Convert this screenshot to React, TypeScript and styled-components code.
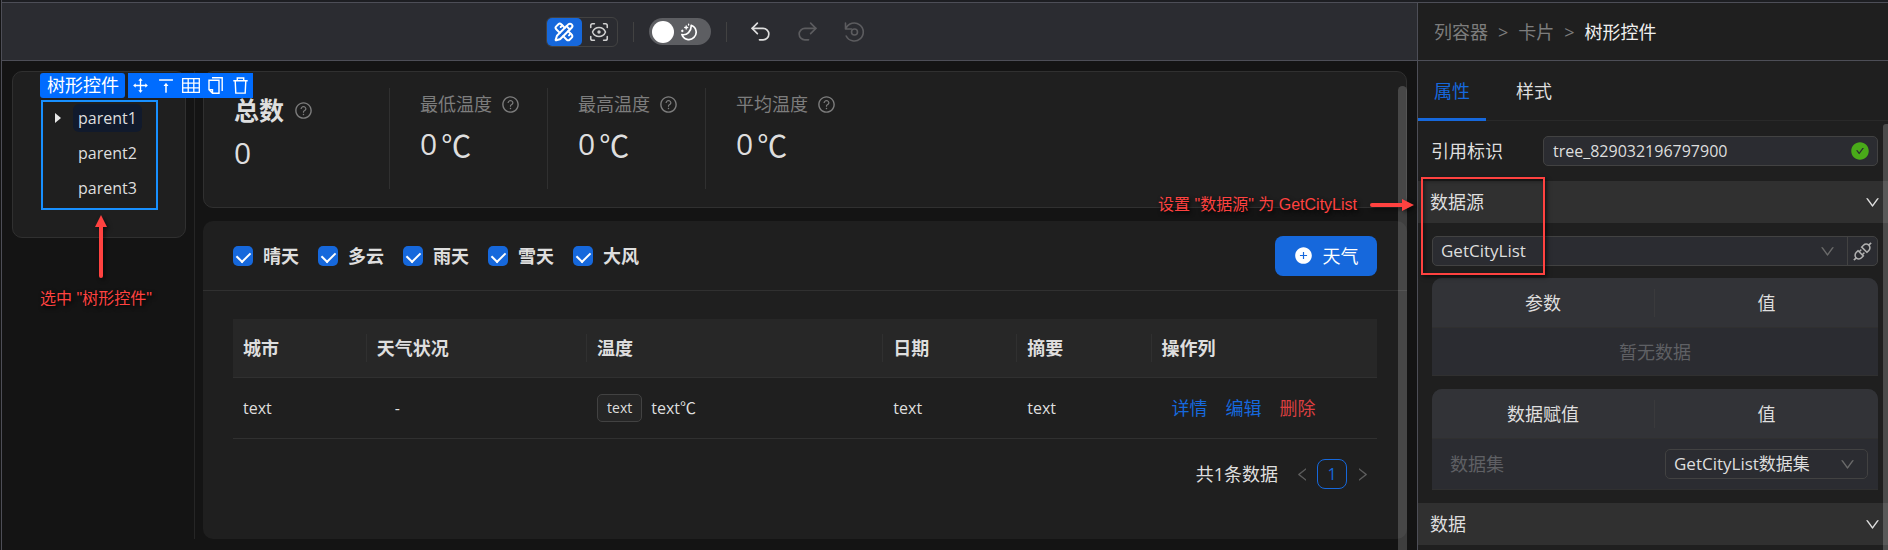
import React from "react";
import styled, { createGlobalStyle, css } from "styled-components";
import { PencilRuler, ScanEye, Undo2, Redo2 } from "lucide-react";
import {
  AiOutlineQuestionCircle,
  AiFillPlusCircle,
  AiFillCheckCircle,
  AiOutlineApi,
  AiOutlineDown,
  AiOutlineLeft,
  AiOutlineRight,
  AiOutlineDrag,
  AiOutlineVerticalAlignTop,
} from "react-icons/ai";

const c = {
  line: "#4d4e57",
  soft: "#303030",
  page: "#141414",
  card: "#1f1f1f",
  bar: "#2b2c31",
  text: "#dedede",
  mute: "#7d7d7d",
  blue: "#1668dc",
  red: "#ff4240",
};

const GlobalStyle = createGlobalStyle`
  * { box-sizing: border-box; }
  body {
    margin: 0;
    background: ${c.page};
    color: ${c.text};
    font: 18px/28px "Open Sans", "Noto Sans CJK SC", sans-serif;
  }
  button, input, select { font: inherit; color: inherit; }
  button { padding: 0; border: 0; background: none; }
  svg { display: block; flex: none; }
`;

/* ---------- shell ---------- */

const Shell = styled.div`
  position: relative;
  display: grid;
  grid-template-columns: minmax(0, 1fr) 471px;
  grid-template-rows: 3px 1fr;
  min-height: 100vh;
  margin-left: 1px;
  border-left: 1px solid ${c.line};
  overflow: hidden;
  &::before {
    content: "";
    grid-column: 1 / -1;
    background: #1d1e22;
    border-bottom: 1px solid ${c.line};
  }
`;

const Main = styled.main`
  display: flex;
  flex-direction: column;
`;

const Toolbar = styled.header`
  display: flex;
  align-items: center;
  justify-content: center;
  height: 58px;
  padding-right: 7px;
  background: ${c.bar};
  border-bottom: 1px solid ${c.line};
`;

const ModeGroup = styled.div`
  display: flex;
  border: 1px solid #424242;
  border-radius: 6px;
`;

const ModeButton = styled.button<{ $on?: boolean }>`
  display: flex;
  align-items: center;
  justify-content: center;
  width: 35px;
  height: 28px;
  border-radius: 5px;
  color: ${(p) => (p.$on ? "#fff" : "#d0d0d0")};
  background: ${(p) => (p.$on ? c.blue : "transparent")};
`;

const Separator = styled.span`
  width: 1px;
  height: 20px;
  margin: 0 15px;
  background: #424242;
`;

const ThemeSwitch = styled.button`
  display: flex;
  align-items: center;
  gap: 6px;
  width: 62px;
  height: 27px;
  padding: 0 3px;
  border-radius: 14px;
  background: #5d5e62;
  color: #fff;
`;

const Knob = styled.span`
  width: 22px;
  height: 22px;
  border-radius: 50%;
  background: #fff;
`;

const History = styled.div`
  display: flex;
  gap: 22px;
  padding-left: 6px;
`;

const HistoryButton = styled.button`
  width: 25px;
  color: ${c.text};
  &:disabled { color: #5c5c5f; }
`;

/* ---------- canvas ---------- */

const Canvas = styled.div`
  position: relative;
  display: flex;
  flex: 1;
  gap: 8px;
  padding: 10px 10px 11px;
`;

const SideColumn = styled.div`
  width: 183px;
  padding-right: 8px;
  border-right: 1px solid #262626;
`;

const card = css`
  background: ${c.card};
  border: 1px solid ${c.soft};
  border-radius: 10px;
`;

const TreeCard = styled.section`
  ${card}
  height: 167px;
  padding: 28px;
`;

const Selected = styled.div`
  position: relative;
  width: 117px;
  border: 2px solid #1890ff;
`;

const SelectionBar = styled.div`
  position: absolute;
  left: -3px;
  bottom: 100%;
  display: flex;
  gap: 3px;
  padding-bottom: 4px;
`;

const SelectionName = styled.span`
  height: 25px;
  padding: 0 6px 0 7px;
  border-radius: 3px;
  background: #006cff;
  color: #fff;
  line-height: 25px;
  white-space: nowrap;
`;

const SelectionTools = styled.div`
  display: flex;
  height: 25px;
  background: #006cff;
  color: #fff;
`;

const ToolButton = styled.button`
  display: flex;
  align-items: center;
  justify-content: center;
  width: 25px;
`;

const TreeList = styled.ul`
  display: grid;
  gap: 7px;
  margin: 0;
  padding: 2px 0 6px;
  list-style: none;
`;

const TreeRow = styled.li`
  display: flex;
  align-items: center;
  height: 28px;
  font-size: 16px;
`;

const Caret = styled.span`
  display: flex;
  width: 30px;
  padding-left: 12px;
`;

const TreeLabel = styled.span<{ $on?: boolean }>`
  padding: 0 5px;
  border-radius: 6px;
  background: ${(p) => (p.$on ? "#111a2c" : "transparent")};
`;

const Content = styled.div`
  display: flex;
  flex: 1;
  flex-direction: column;
  gap: 13px;
  min-width: 0;
`;

const Stats = styled.section`
  ${card}
  display: flex;
  height: 137px;
  padding: 16px 0 0;
`;

const Stat = styled.div<{ $main?: boolean }>`
  width: ${(p) => (p.$main ? "186px" : "158px")};
  height: 101px;
  padding: ${(p) => (p.$main ? "8px 0 0 30px" : "2px 0 0 30px")};
  border-right: 1px solid ${c.soft};
  &:last-child { border-right: 0; }
`;

const StatTitle = styled.h2<{ $main?: boolean }>`
  display: flex;
  align-items: center;
  gap: ${(p) => (p.$main ? "10px" : "9px")};
  margin: 0;
  color: ${(p) => (p.$main ? c.text : c.mute)};
  font-size: ${(p) => (p.$main ? "25px" : "18px")};
  font-weight: ${(p) => (p.$main ? 700 : 400)};
  line-height: 28px;
  svg { color: ${c.mute}; }
`;

const StatValue = styled.p<{ $main?: boolean }>`
  display: flex;
  gap: 4px;
  margin: ${(p) => (p.$main ? "11px" : "8px")} 0 0;
  font-size: 30px;
  line-height: 36px;
`;

const Unit = styled.span`
  font-family: "Noto Sans CJK SC", sans-serif;
  font-size: 30px;
`;

const Weather = styled.section`
  flex: 1;
  background: ${c.card};
  border-radius: 10px;
`;

const Filters = styled.div`
  display: flex;
  align-items: center;
  height: 70px;
  padding: 0 30px;
  border-bottom: 1px solid ${c.soft};
`;

const CheckLabel = styled.label`
  display: flex;
  align-items: center;
  gap: 10px;
  width: 85px;
  font-weight: 700;
`;

const CheckInput = styled.input`
  appearance: none;
  width: 20px;
  height: 20px;
  margin: 0;
  border-radius: 5px;
  background: ${c.blue};
  &:checked::before {
    content: "";
    display: block;
    width: 7px;
    height: 11px;
    margin: 3px 6px;
    border: solid #fff;
    border-width: 0 2px 2px 0;
    transform: rotate(45deg);
  }
`;

const AddButton = styled.button`
  display: flex;
  align-items: center;
  justify-content: center;
  gap: 10px;
  width: 102px;
  height: 40px;
  margin-left: auto;
  border-radius: 8px;
  background: ${c.blue};
  color: #fff;
`;

const TableArea = styled.div`
  padding: 28px 30px 0;
`;

const DataTable = styled.table`
  width: 100%;
  border-collapse: separate;
  border-spacing: 0;
  table-layout: fixed;
`;

const HeadCell = styled.th<{ $w: string }>`
  width: ${(p) => p.$w};
  height: 59px;
  padding: 0;
  background: #272727;
  border-bottom: 1px solid ${c.soft};
  text-align: left;
  span {
    display: block;
    padding-left: 10px;
    border-right: 1px solid ${c.soft};
  }
  &:last-child span { border-right: 0; }
`;

const Cell = styled.td<{ $pad?: number }>`
  height: 61px;
  padding: 0 0 0 ${(p) => p.$pad ?? 10}px;
  border-bottom: 1px solid ${c.soft};
  font-size: 16px;
`;

const Temperature = styled.div`
  display: flex;
  align-items: center;
  gap: 9px;
`;

const Tag = styled.span`
  padding: 0 9px;
  border: 1px solid #424242;
  border-radius: 5px;
  background: #262626;
  font-size: 14px;
  line-height: 26px;
`;

const Actions = styled.div`
  display: flex;
  gap: 18px;
  font-size: 18px;
`;

const ActionLink = styled.a<{ $danger?: boolean }>`
  color: ${(p) => (p.$danger ? "#dc3f41" : c.blue)};
  text-decoration: none;
`;

const Pager = styled.nav`
  display: flex;
  align-items: center;
  justify-content: flex-end;
  height: 30px;
  margin-top: 20px;
`;

const PageStep = styled.button`
  display: flex;
  align-items: center;
  justify-content: center;
  width: 30px;
  height: 30px;
  color: #5c5c5c;
`;

const PageNumber = styled.button`
  width: 30px;
  height: 30px;
  border: 1px solid ${c.blue};
  border-radius: 8px;
  color: ${c.blue};
  font-size: 16px;
`;

const PagerTotal = styled.span`
  margin-right: 9px;
`;

const CanvasScroll = styled.div`
  position: absolute;
  top: 25px;
  right: 10px;
  bottom: 0;
  width: 9px;
  border-radius: 5px 5px 0 0;
  background: rgba(255, 255, 255, 0.18);
`;

/* ---------- inspector ---------- */

const Inspector = styled.aside`
  position: relative;
  background: ${c.card};
  border-left: 1px solid ${c.line};
`;

const Crumbs = styled.nav`
  display: flex;
  align-items: center;
  gap: 10px;
  height: 58px;
  padding-left: 16px;
  border-bottom: 1px solid ${c.line};
  color: ${c.mute};
`;

const Crumb = styled.a`
  color: inherit;
  text-decoration: none;
  &:last-child { color: #f0f0f0; }
`;

const Tabs = styled.div`
  display: flex;
  gap: 14px;
  height: 60px;
  border-bottom: 1px solid #292929;
`;

const Tab = styled.button<{ $on?: boolean }>`
  width: 68px;
  height: 60px;
  padding-top: 3px;
  border-bottom: 3px solid ${(p) => (p.$on ? c.blue : "transparent")};
  color: ${(p) => (p.$on ? c.blue : c.text)};
`;

const Field = styled.div`
  display: flex;
  align-items: center;
  justify-content: space-between;
  height: 60px;
  padding: 0 10px 0 13px;
`;

const box = css`
  background: ${c.bar};
  border: 1px solid #424242;
  border-radius: 5px;
`;

const InputBox = styled.div`
  ${box}
  display: flex;
  align-items: center;
  width: 335px;
  height: 30px;
  padding-right: 7px;
  svg { color: #49aa19; }
`;

const TextInput = styled.input`
  flex: 1;
  min-width: 0;
  padding: 0 9px;
  border: 0;
  outline: 0;
  background: none;
  font-size: 16px;
`;

const SectionHead = styled.button`
  display: flex;
  align-items: center;
  justify-content: space-between;
  width: 100%;
  height: 42px;
  padding: 0 7px 0 12px;
  background: #303030;
`;

const SectionBody = styled.div`
  padding: 13px 10px 13px 14px;
`;

const SourceRow = styled.div`
  ${box}
  display: flex;
  height: 30px;
  margin-bottom: 12px;
`;

const SelectWrap = styled.div<{ $boxed?: boolean }>`
  ${(p) => p.$boxed && box}
  position: relative;
  flex: 1;
  height: ${(p) => (p.$boxed ? "30px" : "28px")};
  svg {
    position: absolute;
    top: 6px;
    right: 11px;
    color: #6a6a6a;
    pointer-events: none;
  }
`;

const Select = styled.select`
  appearance: none;
  display: block;
  width: 100%;
  height: 28px;
  padding: 0 8px;
  border: 0;
  outline: 0;
  background: none;
  font-size: 17px;
  line-height: 28px;
`;

const ApiButton = styled.button`
  display: flex;
  align-items: center;
  justify-content: center;
  width: 30px;
  border-left: 1px solid #424242;
  color: #b0b0b0;
`;

const ParamTable = styled.table`
  width: 100%;
  margin-bottom: 13px;
  border-collapse: separate;
  border-spacing: 0;
  border-radius: 10px 10px 0 0;
  overflow: hidden;
  table-layout: fixed;
  background: ${c.bar};
  &:last-child { margin-bottom: 0; }
`;

const ParamHead = styled.th`
  height: 50px;
  padding: 0;
  background: #323337;
  border-bottom: 1px solid ${c.soft};
  font-weight: 400;
  &:first-child span {
    display: block;
    border-right: 1px solid #3a3a3c;
  }
`;

const ParamCell = styled.td<{ $center?: boolean }>`
  height: ${(p) => (p.$center ? "48px" : "51px")};
  padding: 0 10px;
  border-bottom: 1px solid ${c.soft};
  color: #5f6064;
  text-align: ${(p) => (p.$center ? "center" : "left")};
  &:first-child:not(:last-child) { padding-left: 18px; }
  select { color: ${c.text}; }
`;

const PanelScroll = styled.div`
  position: absolute;
  top: 121px;
  right: 0;
  bottom: 0;
  width: 5px;
  border-radius: 3px 0 0 0;
  background: rgba(255, 255, 255, 0.2);
`;

/* ---------- tutorial marks ---------- */

const Note = styled.div`
  color: ${c.red};
  font: 16px/20px "Liberation Sans", "Noto Sans CJK SC", sans-serif;
  white-space: nowrap;
  text-shadow: 2px 2px 4px #000;
  svg { filter: drop-shadow(2px 2px 2px rgba(0, 0, 0, 0.6)); }
`;

const TreeNote = styled(Note)`
  position: absolute;
  top: calc(100% + 6px);
  left: -3px;
  display: grid;
  gap: 9px;
  svg { margin-left: 54px; }
`;

const SourceGroup = styled.section`
  position: relative;
`;

const SourceMark = styled.div`
  position: absolute;
  top: -4px;
  left: 3px;
  width: 124px;
  height: 98px;
  border: 2px solid ${c.red};
  box-shadow: 2px 2px 4px rgba(0, 0, 0, 0.6), inset 2px 2px 4px rgba(0, 0, 0, 0.4);
  pointer-events: none;
`;

const SourceNote = styled(Note)`
  position: absolute;
  top: 14px;
  right: calc(100% + 4px);
  display: flex;
  align-items: center;
  gap: 13px;
`;

/* ---------- drawings ---------- */

const MoonIcon = () => (
  <svg width="18" height="18" viewBox="0 0 18 18" fill="none" stroke="currentColor" strokeWidth="1.7" strokeLinecap="round" strokeLinejoin="round">
    <path d="M11.200 2.300a7.300 7.300 0 1 1-9.300 9.200c5 1.300 9.600-3.400 9.300-9.200z" />
    <path d="M6.200 3v3M4.700 4.500h3M2.300 7.200v1.400M1.600 7.900h1.400M8.600 1.200v.8" strokeWidth="1.300" />
  </svg>
);

const RestoreIcon = () => (
  <svg width="25" height="22" viewBox="0 0 25 22" fill="none" stroke="currentColor" strokeWidth="1.600" strokeLinecap="round" strokeLinejoin="round">
    <path d="M3.500 2v6h6M4 7.500a9 9 0 1 1 .2 7.500" />
    <circle cx="12.500" cy="11" r="3" />
  </svg>
);

const GridIcon = () => (
  <svg width="18" height="15" viewBox="0 0 18 15" fill="none" stroke="currentColor" strokeWidth="1.300">
    <path d="M.7.7h16.600v13.600H.7zM.7 5.200h16.600M.7 9.800h16.600M6.200.7v13.600M11.800.7v13.600" />
  </svg>
);

const CopyIcon = () => (
  <svg width="15" height="17" viewBox="0 0 15 17" fill="none" stroke="currentColor" strokeWidth="1.400">
    <path d="M4 .8h10.200V14M1 3.300h10v12.900H4.500L1 12.700zM1 12.700h3.500v3.500" />
  </svg>
);

const TrashIcon = () => (
  <svg width="15" height="17" viewBox="0 0 15 17" fill="none" stroke="currentColor" strokeWidth="1.400">
    <path d="M.3 3.700h14.400M4.300 3.700V1h6.400v2.700M2.200 3.700l.6 12.400h9.400l.6-12.400" />
  </svg>
);

const UpArrow = () => (
  <svg width="14" height="66" viewBox="0 0 14 66">
    <path d="M7 1l6 12H1z" fill={c.red} />
    <path d="M7 12v50" stroke={c.red} strokeWidth="4" strokeLinecap="round" />
  </svg>
);

const RightArrow = () => (
  <svg width="44" height="14" viewBox="0 0 44 14">
    <path d="M44 7L32 1v12z" fill={c.red} />
    <path d="M2 7h32" stroke={c.red} strokeWidth="4" strokeLinecap="round" />
  </svg>
);

const Down = () => <AiOutlineDown size={17} />;

const filters = ["晴天", "多云", "雨天", "雪天", "大风"];
const temps = ["最低温度", "最高温度", "平均温度"];
const columns: [string, string][] = [
  ["城市", "11.7%"],
  ["天气状况", "19.25%"],
  ["温度", "25.9%"],
  ["日期", "11.7%"],
  ["摘要", "11.75%"],
  ["操作列", "19.7%"],
];

export default function App() {
  return (
    <>
      <GlobalStyle />
      <Shell>
        <Main>
          <Toolbar>
            <ModeGroup>
              <ModeButton $on aria-label="设计"><PencilRuler size={20} strokeWidth={2.4} /></ModeButton>
              <ModeButton aria-label="预览"><ScanEye size={22} strokeWidth={1.7} /></ModeButton>
            </ModeGroup>
            <Separator />
            <ThemeSwitch aria-label="主题"><Knob /><MoonIcon /></ThemeSwitch>
            <Separator />
            <History>
              <HistoryButton aria-label="撤销"><Undo2 size={25} strokeWidth={1.6} /></HistoryButton>
              <HistoryButton aria-label="重做" disabled><Redo2 size={25} strokeWidth={1.6} /></HistoryButton>
              <HistoryButton aria-label="还原" disabled><RestoreIcon /></HistoryButton>
            </History>
          </Toolbar>

          <Canvas>
            <SideColumn>
              <TreeCard>
                <Selected>
                  <SelectionBar>
                    <SelectionName>树形控件</SelectionName>
                    <SelectionTools>
                      <ToolButton aria-label="移动"><AiOutlineDrag size={19} /></ToolButton>
                      <ToolButton aria-label="上级"><AiOutlineVerticalAlignTop size={20} /></ToolButton>
                      <ToolButton aria-label="表格"><GridIcon /></ToolButton>
                      <ToolButton aria-label="复制"><CopyIcon /></ToolButton>
                      <ToolButton aria-label="删除"><TrashIcon /></ToolButton>
                    </SelectionTools>
                  </SelectionBar>
                  <TreeList>
                    <TreeRow>
                      <Caret>
                        <svg width="6" height="10" viewBox="0 0 6 10"><path d="M0 0l6 5-6 5z" fill="#e8e8e8" /></svg>
                      </Caret>
                      <TreeLabel $on>parent1</TreeLabel>
                    </TreeRow>
                    <TreeRow><Caret /><TreeLabel>parent2</TreeLabel></TreeRow>
                    <TreeRow><Caret /><TreeLabel>parent3</TreeLabel></TreeRow>
                  </TreeList>
                  <TreeNote><UpArrow />选中 "树形控件"</TreeNote>
                </Selected>
              </TreeCard>
            </SideColumn>

            <Content>
              <Stats>
                <Stat $main>
                  <StatTitle $main>总数<AiOutlineQuestionCircle size={19} /></StatTitle>
                  <StatValue $main>0</StatValue>
                </Stat>
                {temps.map((name) => (
                  <Stat key={name}>
                    <StatTitle>{name}<AiOutlineQuestionCircle size={19} /></StatTitle>
                    <StatValue>0<Unit>℃</Unit></StatValue>
                  </Stat>
                ))}
              </Stats>

              <Weather>
                <Filters>
                  {filters.map((name) => (
                    <CheckLabel key={name}>
                      <CheckInput type="checkbox" defaultChecked />
                      {name}
                    </CheckLabel>
                  ))}
                  <AddButton><AiFillPlusCircle size={19} />天气</AddButton>
                </Filters>
                <TableArea>
                  <DataTable>
                    <thead>
                      <tr>
                        {columns.map(([name, width]) => (
                          <HeadCell key={name} $w={width}><span>{name}</span></HeadCell>
                        ))}
                      </tr>
                    </thead>
                    <tbody>
                      <tr>
                        <Cell>text</Cell>
                        <Cell $pad={28}>-</Cell>
                        <Cell><Temperature><Tag>text</Tag>text℃</Temperature></Cell>
                        <Cell>text</Cell>
                        <Cell>text</Cell>
                        <Cell $pad={20}>
                          <Actions>
                            <ActionLink href="#detail">详情</ActionLink>
                            <ActionLink href="#edit">编辑</ActionLink>
                            <ActionLink href="#delete" $danger>删除</ActionLink>
                          </Actions>
                        </Cell>
                      </tr>
                    </tbody>
                  </DataTable>
                  <Pager>
                    <PagerTotal>共1条数据</PagerTotal>
                    <PageStep aria-label="上一页"><AiOutlineLeft size={17} /></PageStep>
                    <PageNumber>1</PageNumber>
                    <PageStep aria-label="下一页"><AiOutlineRight size={17} /></PageStep>
                  </Pager>
                </TableArea>
              </Weather>
            </Content>
            <CanvasScroll />
          </Canvas>
        </Main>

        <Inspector>
          <Crumbs>
            <Crumb href="#column">列容器</Crumb>&gt;
            <Crumb href="#card">卡片</Crumb>&gt;
            <Crumb href="#tree">树形控件</Crumb>
          </Crumbs>
          <Tabs>
            <Tab $on>属性</Tab>
            <Tab>样式</Tab>
          </Tabs>
          <Field>
            <label htmlFor="ref">引用标识</label>
            <InputBox>
              <TextInput id="ref" defaultValue="tree_829032196797900" />
              <AiFillCheckCircle size={20} />
            </InputBox>
          </Field>
          <SourceGroup>
            <SectionHead>数据源<Down /></SectionHead>
            <SectionBody>
              <SourceRow>
                <SelectWrap>
                  <Select aria-label="数据源"><option>GetCityList</option></Select>
                  <Down />
                </SelectWrap>
                <ApiButton aria-label="连接"><AiOutlineApi size={23} /></ApiButton>
              </SourceRow>
              <ParamTable>
                <thead>
                  <tr><ParamHead><span>参数</span></ParamHead><ParamHead>值</ParamHead></tr>
                </thead>
                <tbody>
                  <tr><ParamCell $center colSpan={2}>暂无数据</ParamCell></tr>
                </tbody>
              </ParamTable>
              <ParamTable>
                <thead>
                  <tr><ParamHead><span>数据赋值</span></ParamHead><ParamHead>值</ParamHead></tr>
                </thead>
                <tbody>
                  <tr>
                    <ParamCell>数据集</ParamCell>
                    <ParamCell>
                      <SelectWrap $boxed>
                        <Select aria-label="数据集"><option>GetCityList数据集</option></Select>
                        <Down />
                      </SelectWrap>
                    </ParamCell>
                  </tr>
                </tbody>
              </ParamTable>
            </SectionBody>
            <SourceMark />
            <SourceNote>设置 "数据源" 为 GetCityList<RightArrow /></SourceNote>
          </SourceGroup>
          <SectionHead>数据<Down /></SectionHead>
          <PanelScroll />
        </Inspector>
      </Shell>
    </>
  );
}
